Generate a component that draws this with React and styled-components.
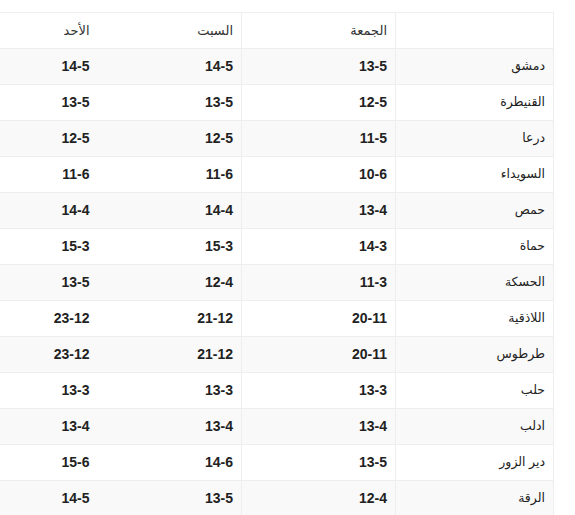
import styled, { createGlobalStyle } from 'styled-components';

const GlobalStyle = createGlobalStyle`
	html, body {
		margin: 0;
		padding: 0;
		background: #fff;
		overflow: hidden;
	}
	body {
		direction: rtl;
		font-family: 'Liberation Sans', 'DejaVu Sans', Arial, sans-serif;
		color: #222;
	}
`;

const Page = styled.div`
	padding: 12px 21px 0 0;
	width: 575px;
	height: 515px;
	box-sizing: border-box;
	overflow: hidden;
`;

const Table = styled.table`
	border-collapse: collapse;
	width: 600px;
	table-layout: fixed;
	border-right: 1px solid #eee;
	font-size: 14px;
`;

const Row = styled.tr`
	background: ${(props) => (props.striped ? '#f9f9f9' : '#fff')};
`;

const HeadCell = styled.th`
	text-align: right;
	font-weight: normal;
	font-size: 13px;
	padding: 8px;
	line-height: 19px;
	border-top: 1px solid #eee;
	color: #333;
	${(props) => (props.divided ? 'border-left: 1px solid #eee;' : '')}
`;

const City = styled.td`
	text-align: right;
	padding: 8px;
	line-height: 19px;
	border-top: 1px solid #eee;
	border-left: 1px solid #eee;
	font-size: 12.5px;
	color: #222;
`;

const Temp = styled.td`
	text-align: right;
	padding: 8px;
	line-height: 19px;
	border-top: 1px solid #eee;
	font-weight: bold;
	color: #222;
	${(props) => (props.divided ? 'border-left: 1px solid #eee;' : '')}
`;

const days = ['الجمعة', 'السبت', 'الأحد'];

const rows = [
	['دمشق', '13-5', '14-5', '14-5'],
	['القنيطرة', '12-5', '13-5', '13-5'],
	['درعا', '11-5', '12-5', '12-5'],
	['السويداء', '10-6', '11-6', '11-6'],
	['حمص', '13-4', '14-4', '14-4'],
	['حماة', '14-3', '15-3', '15-3'],
	['الحسكة', '11-3', '12-4', '13-5'],
	['اللاذقية', '20-11', '21-12', '23-12'],
	['طرطوس', '20-11', '21-12', '23-12'],
	['حلب', '13-3', '13-3', '13-3'],
	['ادلب', '13-4', '13-4', '13-4'],
	['دير الزور', '13-5', '14-6', '15-6'],
	['الرقة', '12-4', '13-5', '14-5'],
];

function App() {
	return (
		<Page>
			<GlobalStyle />
			<Table>
				<colgroup>
					<col style={{ width: 158 }} />
					<col style={{ width: 154 }} />
					<col style={{ width: 144 }} />
					<col style={{ width: 144 }} />
				</colgroup>
				<thead>
					<Row>
						<HeadCell divided></HeadCell>
						{days.map((d, i) => (
							<HeadCell key={d} divided={i === 0}>
								{d}
							</HeadCell>
						))}
					</Row>
				</thead>
				<tbody>
					{rows.map(([city, ...temps], i) => (
						<Row key={city} striped={i % 2 === 0}>
							<City>{city}</City>
							{temps.map((t, j) => (
								<Temp key={j} divided={j === 0}>
									{t}
								</Temp>
							))}
						</Row>
					))}
				</tbody>
			</Table>
		</Page>
	);
}

export default App;
